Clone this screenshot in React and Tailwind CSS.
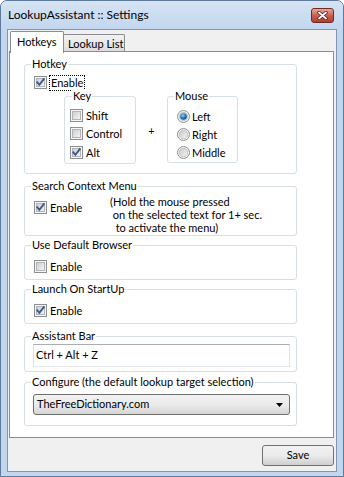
import React from "react";

function CheckBox({ checked }) {
  return (
    <svg width="13" height="13" viewBox="0 0 13 13" className="shrink-0">
      <defs>
        <linearGradient id="cbIn" x1="0" y1="0" x2="1" y2="1">
          <stop offset="0" stopColor="#c9ccd1" />
          <stop offset="1" stopColor="#f7f7f7" />
        </linearGradient>
      </defs>
      <rect x="0.5" y="0.5" width="12" height="12" fill="#f6f6f6" stroke="#8e8f8f" />
      <rect x="2.5" y="2.5" width="8" height="8" fill="url(#cbIn)" stroke="#b1b5ba" />
      {checked && (
        <path d="M3.3 6.3 L5.4 8.8 L9.8 3.2" fill="none" stroke="#3d5a8c" strokeWidth="1.9" strokeLinecap="square" />
      )}
    </svg>
  );
}

function Radio({ checked }) {
  return (
    <svg width="13" height="13" viewBox="0 0 13 13" className="shrink-0">
      <defs>
        <linearGradient id="rbIn" x1="0" y1="0" x2="1" y2="1">
          <stop offset="0" stopColor="#c6c9ce" />
          <stop offset="1" stopColor="#f5f5f5" />
        </linearGradient>
        <radialGradient id="rbDot" cx="0.4" cy="0.35" r="0.7">
          <stop offset="0" stopColor="#8fd0f7" />
          <stop offset="0.5" stopColor="#2d83c5" />
          <stop offset="1" stopColor="#0b3e72" />
        </radialGradient>
      </defs>
      <circle cx="6.5" cy="6.5" r="6" fill="#f4f4f4" stroke="#8e8f8f" />
      <circle cx="6.5" cy="6.5" r="4.2" fill="url(#rbIn)" stroke="#b9bcc0" strokeWidth="0.8" />
      {checked && <circle cx="6.5" cy="6.5" r="3.3" fill="url(#rbDot)" />}
    </svg>
  );
}

function Group({ label, className = "", labelMl = "ml-[6px]", children }) {
  return (
    <div className={`border border-[#d5dfe5] rounded-[3px] ${className}`}>
      <div className="flex -mt-[7px] h-[12px] leading-[12px]">
        <span className={`${labelMl} px-[1px] bg-white whitespace-nowrap`}>{label}</span>
      </div>
      {children}
    </div>
  );
}

function CheckRow({ checked, label, className = "" }) {
  return (
    <div className={`flex items-center h-[17px] ${className}`}>
      <CheckBox checked={checked} />
      <span className="ml-[3px] leading-[17px] whitespace-nowrap">{label}</span>
    </div>
  );
}

function RadioRow({ checked, label, className = "" }) {
  return (
    <div className={`flex items-center h-[17px] ${className}`}>
      <Radio checked={checked} />
      <span className="ml-[2px] leading-[17px] whitespace-nowrap">{label}</span>
    </div>
  );
}

export default function App() {
  return (
    <div className="w-[344px] h-[477px] bg-[#c2d6ee] border border-[#5d7a9c] rounded-t-[7px] flex flex-col overflow-hidden font-['Lato',sans-serif] text-[11px] text-black">
      {/* Title bar */}
      <div className="h-[28px] shrink-0 flex items-center justify-between pl-[7px] pr-[9px] bg-gradient-to-b from-[#d6e4f4] to-[#c2d6ee]">
        <span className="text-[12px] leading-[16px] whitespace-nowrap">LookupAssistant :: Settings</span>
        <div className="w-[23px] h-[15px] rounded-[3px] border border-[#6e2c25] bg-gradient-to-b from-[#e8a899] via-[#cc5f4f] to-[#b33e2e] flex items-center justify-center">
          <svg width="11" height="9" viewBox="0 0 11 9">
            <path d="M2 1.5 L9 7.5 M9 1.5 L2 7.5" stroke="#5b1f18" strokeWidth="3.4" strokeLinecap="round" />
            <path d="M2 1.5 L9 7.5 M9 1.5 L2 7.5" stroke="#ffffff" strokeWidth="1.8" strokeLinecap="round" />
          </svg>
        </div>
      </div>

      {/* Client */}
      <div className="mx-[6px] mb-[4px] flex-1 border border-[#7f97b4] bg-[#f0f0f0] flex flex-col">
        {/* Tabs */}
        <div className="flex items-start h-[21px] shrink-0">
          <div className="ml-[2px] mt-[1px] h-[22px] w-[54px] relative z-10 bg-white border-t border-l border-r border-[#898c95] rounded-t-[2px] pl-[6px] leading-[20px] whitespace-nowrap">
            Hotkeys
          </div>
          <div className="-ml-[1px] mt-[4px] h-[17px] w-[62px] border-t border-l border-r border-[#898c95] rounded-t-[2px] bg-gradient-to-b from-[#f3f3f3] to-[#dcdcdc] pl-[4px] leading-[17px] whitespace-nowrap overflow-hidden">
            Lookup List
          </div>
        </div>

        {/* Panel */}
        <div className="ml-[1px] w-[325px] h-[387px] shrink-0 border border-[#898c95] bg-white flex flex-col pl-[14px]">
          <Group label="Hotkey" className="mt-[12px] w-[273px] pb-[9px]">
            <div className="flex items-start h-[16px] mt-[5px] pl-[9px]">
              <div className="mt-[1px]">
                <CheckBox checked />
              </div>
              <span className="ml-[2px] h-[16px] border border-dotted border-black px-[1px] leading-[14px]">Enable</span>
            </div>
            <div className="flex items-start mt-[5px] pl-[39px]">
              <Group label="Key" className="w-[72px] h-[68px] pl-[5px]" labelMl="ml-[2px]">
                <CheckRow label="Shift" className="mt-[5px]" />
                <CheckRow label="Control" className="mt-[1px]" />
                <CheckRow label="Alt" checked className="mt-[2px]" />
              </Group>
              <div className="w-[31px] self-center text-center mt-[2px]">+</div>
              <Group label="Mouse" className="w-[71px] h-[67px] pl-[9px]" labelMl="ml-[-3px]">
                <RadioRow label="Left" checked className="mt-[6px]" />
                <RadioRow label="Right" className="mt-[1px]" />
                <RadioRow label="Middle" className="mt-[1px]" />
              </Group>
            </div>
          </Group>

          <Group label="Search Context Menu" className="mt-[12px] w-[273px] pb-[1px]">
            <div className="flex items-start pl-[9px]">
              <CheckRow label="Enable" checked className="mt-[7px] w-[76px]" />
              <div className="mt-[3px] leading-[13px] whitespace-pre">
                {"(Hold the mouse pressed\n on the selected text for 1+ sec.\n  to activate the menu)"}
              </div>
            </div>
          </Group>

          <Group label="Use Default Browser" className="mt-[9px] w-[273px] pb-[4px]">
            <CheckRow label="Enable" className="mt-[7px] pl-[9px]" />
          </Group>

          <Group label="Launch On StartUp" className="mt-[9px] w-[273px] pb-[4px]">
            <CheckRow label="Enable" checked className="mt-[7px] pl-[9px]" />
          </Group>

          <Group label="Assistant Bar" className="mt-[12px] w-[273px] pb-[4px]">
            <div className="mt-[2px] ml-[8px] w-[257px] h-[23px] border border-[#abadb3] border-l-[#dbdfe6] border-r-[#dbdfe6] border-b-[#e3e9ef] bg-white pl-[2px] flex items-center">
              Ctrl + Alt + Z
            </div>
          </Group>

          <Group label="Configure (the default lookup target selection)" className="mt-[10px] w-[273px] pb-[10px]">
            <div className="mt-[6px] ml-[8px] w-[257px] h-[21px] rounded-[3px] border border-[#707070] bg-gradient-to-b from-[#f2f2f2] via-[#ebebeb] to-[#d6d6d6] flex items-center justify-between pl-[3px] pr-[6px]">
              <span>TheFreeDictionary.com</span>
              <svg width="7" height="4" viewBox="0 0 7 4">
                <path d="M0 0 H7 L3.5 4 Z" fill="#000" />
              </svg>
            </div>
          </Group>
        </div>

        {/* Save button */}
        <div className="flex justify-end pr-[2px] mt-[7px]">
          <div className="w-[72px] h-[21px] rounded-[3px] border border-[#707070] bg-gradient-to-b from-[#f2f2f2] via-[#ebebeb] to-[#cfcfcf] flex items-center justify-center">
            Save
          </div>
        </div>
      </div>
    </div>
  );
}
